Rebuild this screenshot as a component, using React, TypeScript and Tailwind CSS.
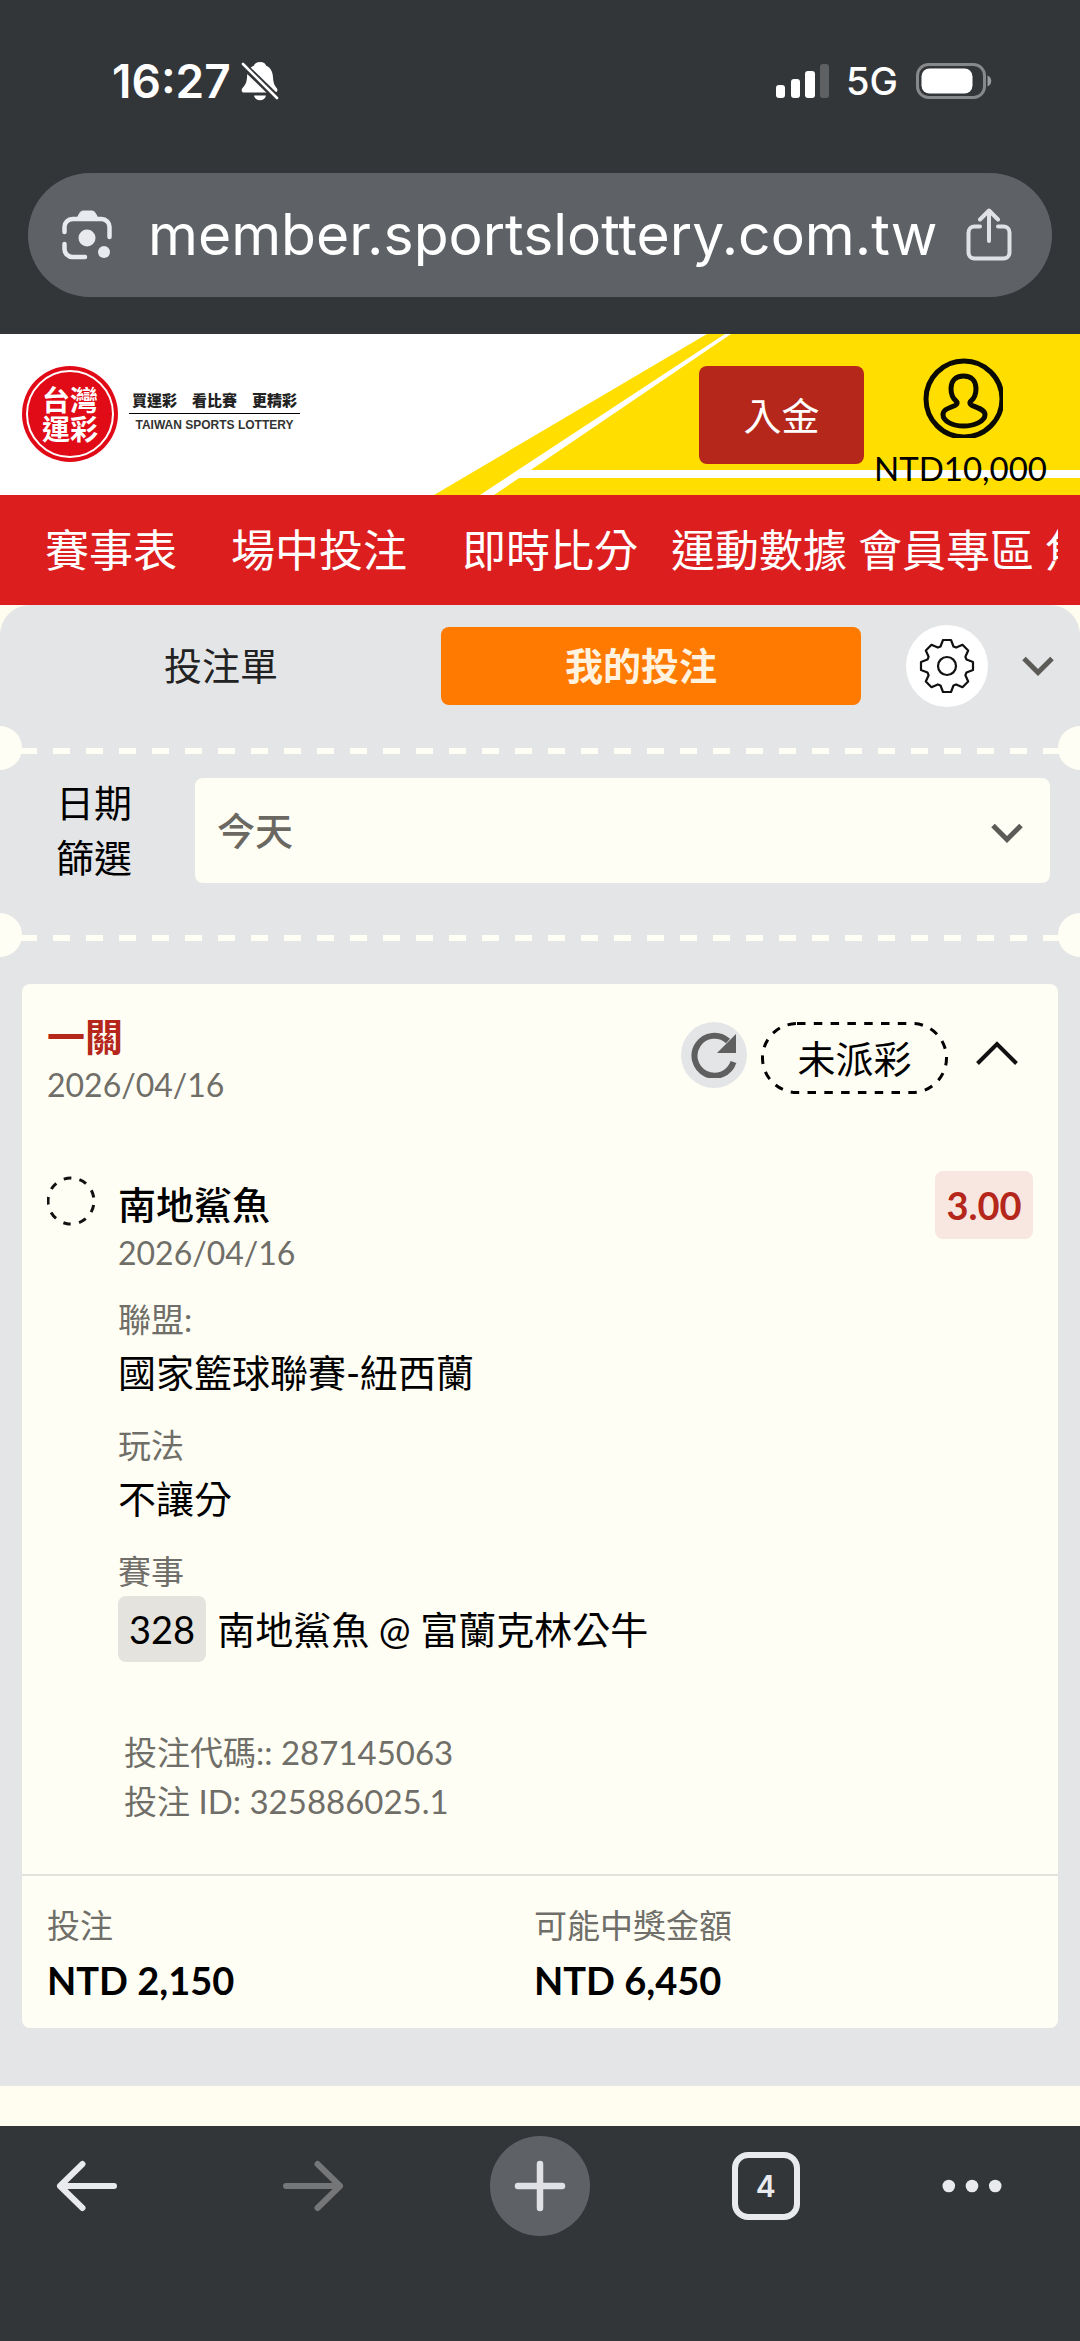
import { ReactNode } from 'react'

const navItems = [
  { label: '賽事表', gap: 'mr-[54px]' },
  { label: '場中投注', gap: 'mr-[55px]' },
  { label: '即時比分', gap: 'mr-[33px]' },
  { label: '運動數據', gap: 'mr-[11px]' },
  { label: '會員專區', gap: 'mr-[11px]' },
  { label: '焦點賽事', gap: '' },
]

function StatusBar() {
  return (
    <div className="flex h-[50px] items-center justify-between pr-[88px] pl-[112px] font-['Inter',sans-serif] text-white">
      <div className="flex items-center gap-[10px]">
        <span className="text-[46px] leading-[50px] font-semibold">16:27</span>
        <svg width="38" height="40" viewBox="0 0 38 40" fill="none">
          <path
            d="M19 1c3.600 0 5.500 1.700 6.200 3.800 4.500 2 6.500 6 6.800 11.500.3 6 1.600 8.200 3.600 10.600 1.600 2 .8 4.600-1.800 4.600H3.200c-2.600 0-3.300-2.600-1.700-4.600 2.500-2.600 4.200-5 4.500-10.600.3-5.500 2.300-9.500 6.800-11.500C13.500 2.700 15.400 1 19 1z"
            fill="#fff"
          />
          <path d="M13 34.500h12c-.6 3-3 4.700-6 4.700s-5.400-1.700-6-4.700z" fill="#fff" />
          <path d="M1 3l36 35" stroke="#333639" strokeWidth="7" />
          <path d="M2 3l34 34" stroke="#fff" strokeWidth="2.600" strokeLinecap="round" />
        </svg>
      </div>
      <div className="flex items-center">
        <svg width="54" height="36" viewBox="0 0 54 36">
          <rect x="0" y="22" width="9" height="13" rx="3" fill="#fff" />
          <rect x="15" y="16" width="9" height="19" rx="3" fill="#fff" />
          <rect x="29" y="8" width="10" height="27" rx="3" fill="#fff" />
          <rect x="44" y="1" width="9" height="34" rx="3" fill="#5f6062" />
        </svg>
        <span className="ml-4 text-[38px] leading-[50px] font-medium">5G</span>
        <svg className="ml-[18px]" width="76" height="38" viewBox="0 0 76 38">
          <rect x="1.500" y="2.500" width="67" height="33" rx="11" fill="none" stroke="#87888a" strokeWidth="3" />
          <rect x="5.500" y="6.500" width="51" height="25" rx="8" fill="#fff" />
          <path d="M71.500 13.500c5 2 5 9 0 11z" fill="#9a9b9c" />
        </svg>
      </div>
    </div>
  )
}

function AddressBar() {
  return (
    <div className="mx-7 mt-[67px] flex h-[124px] items-center rounded-full bg-[#5e6266] pr-10 pl-[34px]">
      <button aria-label="Lens">
        <svg width="50" height="50" viewBox="0 0 50 50" fill="none" stroke="#e8eaed" strokeWidth="4.500" strokeLinecap="round">
          <path d="M2.500 22v-5a8 8 0 0 1 8-8h29a8 8 0 0 1 8 8v10" />
          <path d="M2.500 34v5a8 8 0 0 0 8 8H23" />
          <path d="M15.500 7.500l2-4Q18.500 1 21 1h9q2.500 0 3.500 2.500l2 4z" fill="#e8eaed" strokeWidth="1" />
          <circle cx="25" cy="28" r="8.500" fill="#e8eaed" stroke="none" />
          <circle cx="42" cy="42" r="6" fill="#e8eaed" stroke="none" />
        </svg>
      </button>
      <span className="min-w-0 flex-1 pl-9 font-['Inter',sans-serif] text-[57px] leading-[76px] whitespace-nowrap text-white">
        member.sportslottery.com.tw
      </span>
      <button aria-label="Share">
        <svg width="46" height="54" viewBox="0 0 46 54" fill="none" stroke="#dfe1e4" strokeWidth="4" strokeLinecap="round" strokeLinejoin="round">
          <path d="M14 18.500H8.500a6 6 0 0 0-6 6v20a6 6 0 0 0 6 6h29a6 6 0 0 0 6-6v-20a6 6 0 0 0-6-6H32" />
          <path d="M23 33V3M14 11.500L23 2.500l9 9" />
        </svg>
      </button>
    </div>
  )
}

function SiteHeader() {
  return (
    <header className="relative flex h-[161px] items-start justify-between bg-white">
      <svg className="absolute inset-y-0 right-0" width="646" height="161" viewBox="434 0 646 161">
        <path d="M707 0H1080V161H434z" fill="#ffde00" />
        <path d="M725 0H731L494 161H480z" fill="#fff" />
        <path d="M524 136H1080V144H512z" fill="#fff" />
      </svg>
      <a href="#" className="flex items-center pt-8 pl-[22px]">
        <span className="flex size-24 rounded-full bg-[#e10a17] p-1">
          <span className="flex flex-1 items-center justify-center rounded-full border-2 border-white text-center font-['Noto_Sans_CJK_TC',sans-serif] text-[28px] leading-[29px] font-bold text-white">
            台灣
            <br />
            運彩
          </span>
        </span>
        <span className="ml-[11px] flex flex-col items-center pb-[5px]">
          <span className="border-b border-black px-[3px] pb-1 font-['Noto_Sans_CJK_TC',sans-serif] text-[15px] leading-[18px] font-black text-[#222]">
            買運彩　看比賽　更精彩
          </span>
          <span className="pt-1 font-['Liberation_Sans',sans-serif] text-[12px] leading-[14px] font-bold text-[#333]">
            TAIWAN SPORTS LOTTERY
          </span>
        </span>
      </a>
      <div className="relative flex pr-[33px]">
        <button className="mt-8 h-[98px] w-[165px] rounded-lg bg-[#b5271b] text-[38px] leading-[50px] text-white">入金</button>
        <a href="#" className="ml-[10px] flex flex-col items-center pt-6">
          <svg className="ml-1" width="80" height="80" viewBox="0 0 80 80" fill="none" stroke="#0b0a00" strokeWidth="5">
            <circle cx="41" cy="41" r="38" />
            <path
              d="M40.500 18c-8 0-12.500 5-12.500 12.500 0 5 2 10 5 12.500 2 1.700 1 3.600-1 4.500-8 3-12 4.800-12 9 0 7 10 11.500 20.500 11.500S62 63.500 62 56.500c0-4.200-5-6-13-9-2-.9-3-2.800-1-4.500 3-2.500 5-7.500 5-12.500C53 23 48.500 18 40.500 18z"
            />
          </svg>
          <span className="mt-[10px] text-[33px] leading-10 text-black">NTD10,000</span>
        </a>
      </div>
    </header>
  )
}

function SiteNav() {
  return (
    <nav className="bg-[#dc1e1f] px-[22px]">
      <div className="flex overflow-hidden pl-[23px] whitespace-nowrap">
        {navItems.map((item) => (
          <a key={item.label} href="#" className={`shrink-0 text-[44px] leading-[110px] text-white ${item.gap}`}>
            {item.label}
          </a>
        ))}
      </div>
    </nav>
  )
}

function ChevronDown({ className }: { className?: string }) {
  return (
    <svg className={className} width="32" height="20" viewBox="0 0 32 20" fill="none" stroke="#5c5b58" strokeWidth="5">
      <path d="M2 2.500l14 14 14-14" />
    </svg>
  )
}

function BetTabs() {
  return (
    <div className="flex items-center pt-5 pr-[26px] pl-[11px] text-[38px] leading-[50px]">
      <div className="grid flex-1 grid-cols-2 gap-[10px]">
        <button className="h-[78px] rounded-lg pb-[2px] text-[#222]">投注單</button>
        <button className="h-[78px] rounded-lg bg-[#ff7a00] pr-5 pb-[2px] font-bold text-[#fff3e0]">我的投注</button>
      </div>
      <button aria-label="設定" className="ml-[45px] flex size-[82px] items-center justify-center rounded-full bg-white">
        <svg width="56" height="56" viewBox="-28 -28 56 56" fill="none" stroke="#111" strokeWidth="2.200" strokeLinejoin="round">
          <path d="M-4-26H4L6.500-19.500 9.200-18.400 15.500-21.200 21.200-15.500 18.400-9.200 19.500-6.500 26-4V4L19.500 6.500 18.400 9.200 21.200 15.500 15.500 21.200 9.200 18.400 6.500 19.500 4 26H-4L-6.500 19.500-9.200 18.400-15.500 21.200-21.200 15.500-18.400 9.200-19.500 6.500-26 4V-4L-19.500-6.500-18.400-9.200-21.200-15.500-15.500-21.200-9.200-18.400-6.500-19.500z" />
          <circle r="9" />
        </svg>
      </button>
      <button aria-label="收合" className="ml-[34px]">
        <ChevronDown />
      </button>
    </div>
  )
}

function TicketDivider({ className }: { className: string }) {
  return (
    <div className={`relative h-11 overflow-hidden px-5 pt-[22px] ${className}`}>
      <div className="h-[6px] bg-[repeating-linear-gradient(to_right,#fffef5_0_17px,transparent_17px_33px)]" />
      <span className="absolute top-0 -left-[22px] size-11 rounded-full bg-[#fffef5]" />
      <span className="absolute top-0 -right-[22px] size-11 rounded-full bg-[#fffef5]" />
    </div>
  )
}

function DateFilter() {
  return (
    <div className="mt-[5px] flex items-center pr-[30px] pl-14">
      <label htmlFor="date-filter" className="w-[139px] text-[38px] leading-[55px] text-black">
        日期
        <br />
        篩選
      </label>
      <div className="relative flex-1">
        <select
          id="date-filter"
          className="h-[105px] w-full appearance-none rounded-lg bg-[#fffef5] pl-[22px] text-[38px] leading-[50px] font-medium text-[#6b6862]"
        >
          <option>今天</option>
          <option>昨天</option>
          <option>最近七天</option>
        </select>
        <ChevronDown className="pointer-events-none absolute top-[45px] right-[27px]" />
      </div>
    </div>
  )
}

function Field({ label, children }: { label: string; children: ReactNode }) {
  return (
    <div>
      <dt className="text-[33px] leading-[50px] text-[#706e68]">{label}</dt>
      <dd className="text-[38px] leading-[56px] text-black">{children}</dd>
    </div>
  )
}

function BetCard() {
  return (
    <article className="mx-[22px] mt-[27px] rounded-lg bg-[#fffef5]">
      <div className="px-[25px] pt-7 pb-12">
        <div className="flex items-start">
          <div className="flex-1">
            <h2 className="text-[38px] leading-[48px] font-bold text-[#b5271b]">一關</h2>
            <p className="text-[32px] leading-[50px] text-[#706e68]">2026/04/16</p>
          </div>
          <div className="flex items-start pt-[10px] pr-[15px]">
            <button aria-label="重新整理" className="flex size-[66px] items-center justify-center rounded-full bg-[#e4e5e7]">
              <svg width="46" height="46" viewBox="0 0 46 46" fill="none">
                <path d="M42.500 30A20 20 0 1 1 37 9" stroke="#5f5f5f" strokeWidth="6" />
                <path d="M45 2v19H26z" fill="#5f5f5f" />
              </svg>
            </button>
            <span className="relative ml-[14px] flex h-[72px] w-[187px] items-center justify-center text-[38px] leading-[50px] text-black">
              <svg className="absolute inset-0" width="187" height="72" viewBox="0 0 187 72" fill="none">
                <rect x="1.500" y="1.500" width="184" height="69" rx="34.500" stroke="#000" strokeWidth="3" strokeDasharray="8.500 8.300" />
              </svg>
              未派彩
            </span>
            <button aria-label="收合注單" className="ml-7 flex h-[62px] items-center">
              <svg width="42" height="26" viewBox="0 0 42 26" fill="none" stroke="#111" strokeWidth="4">
                <path d="M1.500 23.500L21 4l19.500 19.500" />
              </svg>
            </button>
          </div>
        </div>

        <div className="mt-[61px] flex items-start">
          <svg className="mt-[5px]" width="50" height="50" viewBox="0 0 50 50" fill="none">
            <circle cx="24" cy="25" r="23" stroke="#111" strokeWidth="3" strokeDasharray="7.600 8.457" transform="rotate(10 24 25)" />
          </svg>
          <div className="ml-[21px] flex-1 pt-[9px]">
            <h3 className="text-[38px] leading-[48px] font-medium text-black">南地鯊魚</h3>
            <p className="text-[32px] leading-[50px] text-[#706e68]">2026/04/16</p>
            <dl className="mt-4 flex flex-col gap-5">
              <Field label="聯盟:">國家籃球聯賽-紐西蘭</Field>
              <Field label="玩法">不讓分</Field>
              <Field label="賽事">
                <span className="flex items-center gap-[11px]">
                  <span className="rounded-lg bg-[#e5e3dd] px-[11px] leading-[66px]">328</span>
                  <span>南地鯊魚 @ 富蘭克林公牛</span>
                </span>
              </Field>
            </dl>
            <div className="mt-[66px] pl-[6px] text-[33px] leading-[49px] text-[#706e68]">
              <p>投注代碼:: 287145063</p>
              <p>投注 ID: 325886025.1</p>
            </div>
          </div>
          <span className="w-[98px] rounded-lg bg-[#f8e7e0] text-center text-[38px] leading-[68px] font-bold text-[#b5271b]">3.00</span>
        </div>
      </div>

      <dl className="grid grid-cols-2 border-t-2 border-[#e3e2dc] pt-6 pr-[37px] pb-[18px] pl-[25px]">
        <div>
          <dt className="text-[33px] leading-[50px] text-[#706e68]">投注</dt>
          <dd className="text-[38px] leading-[60px] font-bold text-black">NTD 2,150</dd>
        </div>
        <div>
          <dt className="text-[33px] leading-[50px] text-[#706e68]">可能中獎金額</dt>
          <dd className="text-[38px] leading-[60px] font-bold text-black">NTD 6,450</dd>
        </div>
      </dl>
    </article>
  )
}

function BrowserToolbar() {
  return (
    <footer className="flex flex-1 items-start justify-between bg-[#333639] pt-[10px] pr-[78px] pb-[104px] pl-[37px]">
      <button aria-label="Back" className="flex size-[100px] items-center justify-center">
        <svg width="62" height="52" viewBox="0 0 62 52" fill="none" stroke="#e8eaed" strokeWidth="6" strokeLinecap="round" strokeLinejoin="round">
          <path d="M58 26H4M26.500 4L4 26l22.500 22" />
        </svg>
      </button>
      <button aria-label="Forward" className="flex size-[100px] items-center justify-center">
        <svg width="62" height="52" viewBox="0 0 62 52" fill="none" stroke="#757677" strokeWidth="6" strokeLinecap="round" strokeLinejoin="round">
          <path d="M4 26h54M35.500 4L58 26 35.500 48" />
        </svg>
      </button>
      <button aria-label="New tab" className="flex size-[100px] items-center justify-center rounded-full bg-[#5e6266]">
        <svg width="52" height="52" viewBox="0 0 52 52" fill="none" stroke="#dfe1e4" strokeWidth="6.500" strokeLinecap="round">
          <path d="M26 4v44M4 26h44" />
        </svg>
      </button>
      <button aria-label="Tabs" className="flex size-[100px] items-center justify-center">
        <span className="flex size-[68px] items-center justify-center rounded-[16px] border-[6px] border-[#e8eaed] font-['Inter',sans-serif] text-[30px] leading-10 font-semibold text-[#e8eaed]">
          4
        </span>
      </button>
      <button aria-label="More" className="flex h-[100px] w-[60px] items-center justify-center">
        <svg width="62" height="14" viewBox="0 0 62 14" fill="#e8eaed">
          <circle cx="7" cy="7" r="6.500" />
          <circle cx="31" cy="7" r="6.500" />
          <circle cx="55" cy="7" r="6.500" />
        </svg>
      </button>
    </footer>
  )
}

export default function App() {
  return (
    <div className="flex min-h-screen flex-col bg-[#fffdf0] font-['Lato','Noto_Sans_CJK_TC',sans-serif]">
      <div className="bg-[#333639] pt-14 pb-[37px]">
        <StatusBar />
        <AddressBar />
      </div>
      <SiteHeader />
      <SiteNav />
      <main className="mb-10 rounded-t-[30px] bg-[#e4e5e7] pb-[58px]">
        <BetTabs />
        <TicketDivider className="mt-[19px]" />
        <DateFilter />
        <TicketDivider className="mt-7" />
        <BetCard />
      </main>
      <BrowserToolbar />
    </div>
  )
}
